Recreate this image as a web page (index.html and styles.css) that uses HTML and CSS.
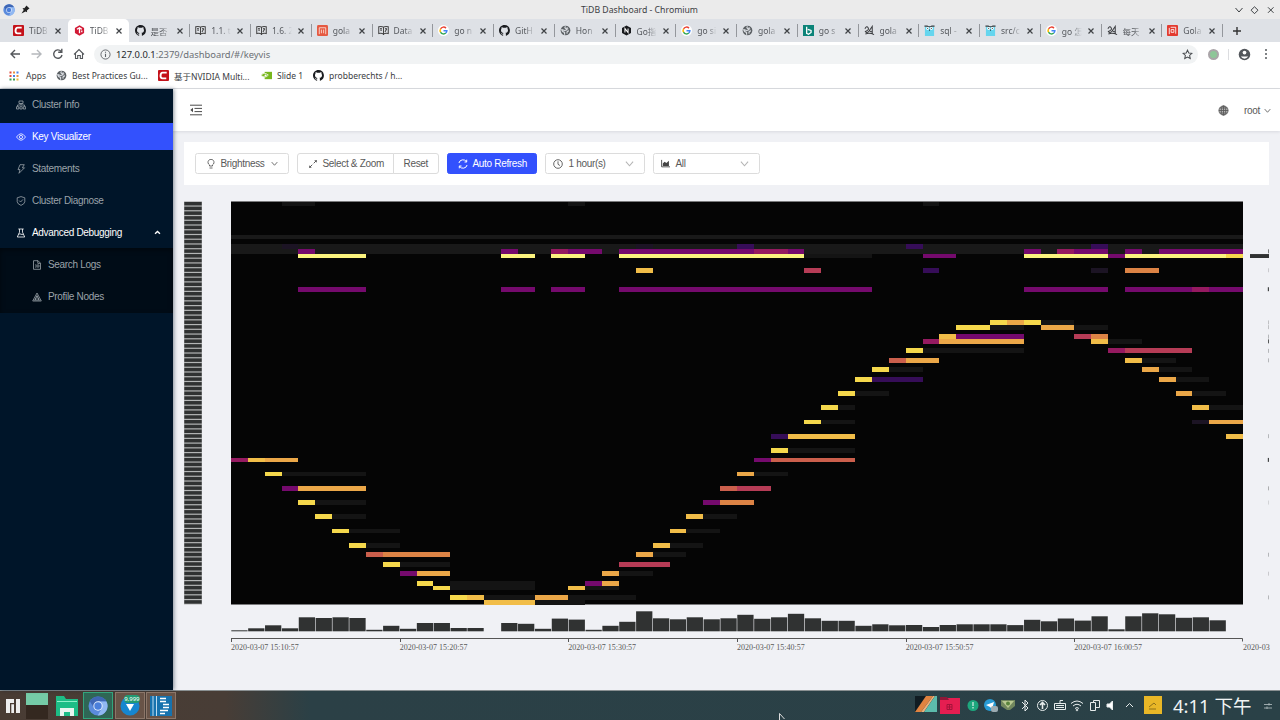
FILE: index.html
```html
<!DOCTYPE html>
<html lang="en">
<head>
<meta charset="utf-8">
<title>TiDB Dashboard</title>
<link rel="stylesheet" href="styles.css">
</head>
<body>
<svg class="defs" aria-hidden="true">
  <symbol id="cc" viewBox="0 0 12 12"><rect width="12" height="12" rx="1" fill="#c4121a"/><path d="M9.500 2.900H5Q3 2.900 2.800 6T5 9.100h4" fill="none" stroke="#fff" stroke-width="2.100"/></symbol>
  <symbol id="ti" viewBox="0 0 12 12"><path d="M6 .300l5 2.850v5.700L6 11.700 1 8.850v-5.700z" fill="#d21a36"/><path d="M3.200 4.700L6 3.100l2.600 1.500M6 3.300v5.800M8.500 6v2" fill="none" stroke="#fff" stroke-width="1.400"/></symbol>
  <symbol id="gh" viewBox="0 0 16 16"><path fill="#191b1f" d="M8 0C3.600 0 0 3.600 0 8c0 3.500 2.300 6.500 5.500 7.600.400.100.500-.200.500-.400v-1.500c-2 .400-2.500-.500-2.700-1-.100-.200-.500-1-.800-1.100-.300-.200-.700-.500 0-.500.600 0 1.100.600 1.200.800.700 1.200 1.900.900 2.300.700.100-.500.300-.900.500-1.100-1.800-.200-3.600-.900-3.600-4 0-.900.300-1.600.800-2.100-.100-.200-.400-1 .100-2.100 0 0 .700-.200 2.200.800a7.600 7.600 0 014 0c1.500-1 2.200-.800 2.200-.800.400 1.100.200 1.900.100 2.100.500.600.800 1.300.800 2.100 0 3.100-1.900 3.700-3.600 3.900.300.300.500.700.500 1.500v2.200c0 .200.100.500.600.400A8 8 0 008 0z"/></symbol>
  <symbol id="book" viewBox="0 0 12 12"><path d="M6 2.400Q4 1 .800 1.900v7.400Q4 8.500 6 10q2-1.500 5.200-.700V1.900Q8 1 6 2.400zV11M2.300 3.800l2 .300M2.300 5.500l2 .300M7.600 4.200l2-.400M7.600 7.600l2-3.500" fill="none" stroke="#444" stroke-width="1.100"/></symbol>
  <symbol id="mm" viewBox="0 0 12 12"><rect width="12" height="12" rx="1.500" fill="#e55a42"/><path d="M2.500 10V3h7v7M4.800 9V5M7.200 9V5" fill="none" stroke="#fbd6cc" stroke-width="1"/></symbol>
  <symbol id="goo" viewBox="0 0 12 12"><circle cx="6" cy="6" r="6" fill="#fff"/><g fill="none" stroke-width="1.600"><path d="M8.700 3.400A3.700 3.700 0 002.800 4.200" stroke="#ea4335"/><path d="M2.800 4.200a3.700 3.700 0 000 3.600" stroke="#fbbc05"/><path d="M2.800 7.800a3.700 3.700 0 005.700 1" stroke="#34a853"/><path d="M8.500 8.800A3.700 3.700 0 009.700 6.200H6" stroke="#4285f4"/></g></symbol>
  <symbol id="globe" viewBox="0 0 12 12"><circle cx="6" cy="6" r="5.300" fill="#5b6064"/><path d="M6 1.500Q4.500 3 6.500 4.200T5 6L2 5q0 2.500 3 3v2.500M8 2.500q-1 1.500 1 2M9.800 6.500Q7 6.500 7.800 9.500" fill="none" stroke="#d9dce1" stroke-width="1.300"/></symbol>
  <symbol id="nn" viewBox="0 0 12 12"><path d="M6 .500l4.900 2.750v5.500L6 11.500 1.100 8.750v-5.500z" fill="#17191c"/><path d="M4.300 8.200V3.900l3.400 4.300V3.900" fill="none" stroke="#fff" stroke-width="1.100"/></symbol>
  <symbol id="bing" viewBox="0 0 12 12"><rect width="12" height="12" fill="#0b8378"/><path d="M4 2v7.200l2 .900 2.800-2V6L5.200 4.800" fill="none" stroke="#fff" stroke-width="1.400"/></symbol>
  <symbol id="jin" viewBox="0 0 12 12"><path d="M1 4Q3 .500 4.500 3T1.500 7Q3 9.500 5.500 6.500L9 1.500v8.500M6 6q1.500 2.500 3 .500M1.500 9.800Q6 8 11 10.500" fill="none" stroke="#3b3d40" stroke-width="1.100"/></symbol>
  <symbol id="goph" viewBox="0 0 12 12"><rect x="1" y="2" width="10" height="10" fill="#65d5ee"/><path d="M.500 1.200h3l1 .700h3l1-.700h3" fill="none" stroke="#343d40" stroke-width="1.300"/><circle cx="4" cy="3.800" r="1.600" fill="#fff"/><circle cx="8" cy="3.800" r="1.600" fill="#fff"/><path d="M4 3.200v1M8 3.200v1M6 5v1.200" stroke="#222" stroke-width="1"/></symbol>
  <symbol id="wen" viewBox="0 0 12 12"><rect width="12" height="12" rx="1" fill="#e33b30"/><path d="M2.500 10V3.200M4 2.500h5.500v7M4.500 5h3v3h-3z" fill="none" stroke="#fff" stroke-width=".900"/></symbol>
  <symbol id="chev" viewBox="0 0 10 10"><path d="M1 3l4 4.500L9 3" fill="none" stroke="currentColor" stroke-width="1.200"/></symbol>
  <symbol id="chromium" viewBox="0 0 20 20"><circle cx="10" cy="10" r="9.500" fill="#5b8bdc"/><path d="M10 .500A9.500 9.500 0 001.800 5.200L6 12l4-6.500h8.500A9.500 9.500 0 0010 .500z" fill="#3f67b5"/><path d="M18.500 5.600H10l4 6.500-4.300 7.400A9.500 9.500 0 0018.500 5.600z" fill="#90b8f2"/><circle cx="10" cy="10" r="4.700" fill="#e2edfd"/><circle cx="10" cy="10" r="3.700" fill="#4b7fdb"/></symbol>
</svg>

<header class="titlebar">
  <div class="title-left">
    <svg class="i12"><use href="#chromium"/></svg>
    <svg class="i9" viewBox="0 0 10 10"><path d="M6 .500l3.500 3.500-1 .500L6.600 6l.200 2L5 7.300.500 9.500 3 5.500 1.700 3.300l2 .200L5.500 1.500z" fill="#222"/></svg>
  </div>
  <span>TiDB Dashboard - Chromium</span>
  <svg class="wm" viewBox="0 0 44 12" fill="none" stroke="#3c4043"><path d="M3.500 4l3.500 4 3.500-4M22.500 2.800L26 6.200l-3.500 3.500L19 6.200zM36 3.300l5.500 5.500M41.500 3.300L36 8.800"/></svg>
</header>

<nav class="tabs" id="tabs"></nav>

<div class="toolbar">
  <svg class="navicons" viewBox="0 0 84 14" fill="none" stroke="#54575b" stroke-width="1.400"><path d="M10 7H1M5 3L1 7l4 4"/><path d="M21.500 7h9M27 3l4 4-4 4" stroke="#b5b8bc"/><path d="M51 4.200A4.200 4.200 0 1052 8M51.800 1.800v3.400h-3.600"/><path d="M64 7.500L69 2.500l5 5M65.500 6.500v5h2.200V8.500h2.600v3h2.200v-5" stroke-width="1.100"/></svg>
  <div class="address">
    <svg class="i11" viewBox="0 0 12 12" fill="none" stroke="#5f6368"><circle cx="6" cy="6" r="5"/><path d="M6 5.200v3.600M6 3v1.200" stroke-width="1.200"/></svg>
    <p><b>127.0.0.1</b>:2379/dashboard/#/keyvis</p>
    <svg class="star" viewBox="0 0 12 12" fill="none" stroke="#4a4d51" stroke-width="1.100"><path d="M6 1.200l1.400 3.100 3.400.400-2.500 2.300.700 3.400L6 8.700l-3 1.700.700-3.400L1.200 4.700l3.400-.400z"/></svg>
  </div>
  <span class="ext"></span>
  <span class="split"></span>
  <svg class="avatar" viewBox="0 0 14 14"><circle cx="7" cy="7" r="6.200" fill="#53575c"/><circle cx="7" cy="4.900" r="2" fill="#fff"/><path d="M3 9.200h8Q9.500 11.500 7 11.500T3 9.200z" fill="#fff"/></svg>
  <svg class="dots" viewBox="0 0 4 12" fill="#55585c"><circle cx="2" cy="2" r="1"/><circle cx="2" cy="6" r="1"/><circle cx="2" cy="10" r="1"/></svg>
</div>

<div class="bookmarks">
  <svg class="i10" viewBox="0 0 10 10"><path d="M.500 1.500h2M.500 5h2" stroke="#e04a3f" stroke-width="2"/><path d="M4 1.500h2M7.500 5h2" stroke="#e8913f" stroke-width="2"/><path d="M7.500 1.500h2M4 5h2" stroke="#4a81e8" stroke-width="2"/><path d="M.500 8.500h2M4 8.500h2" stroke="#3b9c56" stroke-width="2"/><path d="M7.500 8.500h2" stroke="#e8b93f" stroke-width="2"/></svg><span class="b1">Apps</span>
  <svg class="i11"><use href="#globe"/></svg><span class="b2">Best Practices Gu...</span>
  <svg class="i11"><use href="#cc"/></svg><span class="b3">基于NVIDIA Multi...</span>
  <svg class="i11" viewBox="0 0 12 12"><path d="M4 2h8v8H4z" fill="#78b71c"/><path d="M0 6q3-4.500 8-.500Q5 9.500 0 6z" fill="#78b71c" stroke="#e7f4d2"/><circle cx="5" cy="6" r="1.200" fill="#fff"/></svg><span class="b4">Slide 1</span>
  <svg class="i11"><use href="#gh"/></svg><span>probberechts / h...</span>
</div>

<main class="app">
  <aside class="side">
    <a class="item"><svg viewBox="0 0 10 10"><path d="M3 1h4v2.500H3zM5 3.500V5M1.500 6.500V5h7v1.500M.500 6.700h2.300V9H.500zM3.900 6.700h2.300V9H3.900zM7.300 6.700h2.300V9H7.300z"/></svg>Cluster Info</a>
    <a class="item on"><svg viewBox="0 0 10 10"><path d="M.500 5Q5-1.500 9.500 5 5 11.500.500 5z"/><circle cx="5" cy="5" r="1.600"/></svg>Key Visualizer</a>
    <a class="item"><svg viewBox="0 0 10 10"><path d="M4 .700h4.300L6.300 3.800h2.200L3 9.300l1-3.700H2z"/></svg>Statements</a>
    <a class="item"><svg viewBox="0 0 10 10"><path d="M5 .600l3.800 1.200v4Q8.500 8 5 9.400 1.500 8 1.200 5.800v-4zM3.200 4.600L4.600 6l2.300-2.500"/></svg>Cluster Diagnose</a>
    <a class="item open"><svg viewBox="0 0 10 10"><path d="M2.300 1h5.400M3.500 1v3.200L1.300 9h7.400L6.500 4.200V1M2.600 6.200q1.400-.700 2.400 0t2.400 0"/></svg>Advanced Debugging<svg class="up" viewBox="0 0 10 10"><path d="M1.500 6.800L5 3.500l3.500 3.300"/></svg></a>
    <div class="sub">
      <a class="item"><svg viewBox="0 0 10 10"><path d="M1.500.700H6L8.500 3.200v6.100h-7zM5.800.700v2.700h2.700M3 5h1.500M3 7h1.500"/><circle cx="6" cy="6" r="1.200"/></svg>Search Logs</a>
      <a class="item"><svg viewBox="0 0 10 10"><path d="M5 1L.700 9h8.600zM2.500 8.500L5 3.500l2.500 5M5 4v5M3.500 6.500v2M6.500 6.500v2"/></svg>Profile Nodes</a>
    </div>
  </aside>
  <section class="main">
    <header class="top">
      <svg class="fold" viewBox="0 0 12 12" fill="none" stroke="#4b4b4b"><path d="M0 1.200h12M4.500 4.400H12M4.500 7.600H12M0 10.800h12"/><path d="M3 3.700v4.600L.300 6z" fill="#4b4b4b" stroke="none"/></svg>
      <div class="user">
        <svg class="world" viewBox="0 0 12 12" fill="none" stroke="#555" stroke-width=".900"><circle cx="6" cy="6" r="5" fill="#b5b5b5"/><ellipse cx="6" cy="6" rx="2.400" ry="5"/><path d="M1 6h10M6 1v10M1.900 3.300h8.200M1.900 8.700h8.200"/></svg>
        <span>root</span><svg class="c8"><use href="#chev"/></svg>
      </div>
    </header>
    <div class="controls">
      <button class="btn bright"><svg class="i10" viewBox="0 0 10 10" fill="none" stroke="currentColor" stroke-width=".900"><path d="M3.500 7V5.900a3 3 0 113 0V7zM3.500 9h3"/></svg>Brightness<svg class="c8"><use href="#chev"/></svg></button>
      <div class="group">
        <button class="btn zoom"><svg class="i10" viewBox="0 0 10 10" fill="none" stroke="currentColor"><path d="M5.700 4.300L8.500 1.500M4.300 5.700L1.500 8.500"/><path d="M6.200 1.200h2.600v2.600zM1.200 6.200v2.600h2.600z" fill="currentColor" stroke="none"/></svg>Select &amp; Zoom</button>
        <button class="btn reset">Reset</button>
      </div>
      <button class="btn primary"><svg class="i10" viewBox="0 0 10 10" fill="none" stroke="currentColor"><path d="M.900 4A4.200 4.200 0 018.500 2.700M9.100 6A4.200 4.200 0 011.500 7.300M8.700.700v2.300H6.500M1.300 9.300V7h2.200"/></svg>Auto Refresh</button>
      <div class="select hours"><svg class="i10" viewBox="0 0 10 10" fill="none" stroke="#555" stroke-width=".900"><circle cx="5" cy="5" r="4.300"/><path d="M5 2.300v3l1.900 1.200"/></svg><span>1 hour(s)</span><svg class="c9"><use href="#chev"/></svg></div>
      <div class="select metric"><svg class="i9" viewBox="0 0 10 10"><path d="M.700 1v7.700H10" fill="none" stroke="#444"/><path d="M2 7.700V5l2-2 2 1.500L8.800 2v5.700z" fill="#444"/></svg><span>All</span><svg class="c9"><use href="#chev"/></svg></div>
    </div>
    <svg class="keyvis" id="keyvis" width="1086" height="460" viewBox="184 200 1086 460"></svg>
  </section>
</main>

<footer class="taskbar">
  <div class="launch">
    <svg width="14" height="14" viewBox="0 0 14 14"><path d="M0 0h8v4H4v10H0zM5.300 5.300H8V14H5.300zM10 0h4v14h-4z" fill="#eee"/></svg>
    <span class="pager"><i></i></span>
    <svg class="files" viewBox="0 0 22 22"><path d="M0 1h8l2 3h12v17H0z" fill="#1dbd86"/><path d="M1 6h20v1H1z" fill="#8ef0c9"/><path d="M4 21v-8h14v8h-4v-4H8v4z" fill="#e9f5ef"/></svg>
    <span class="task active"><svg width="20" height="20"><use href="#chromium"/></svg></span>
    <span class="task"><svg width="20" height="20" viewBox="0 0 20 20"><circle cx="10" cy="10" r="9.500" fill="#1686cf"/><path d="M6 8h8l-4 7z" fill="#fff"/></svg><em>9,999</em></span>
    <span class="task"><svg width="22" height="20" viewBox="0 0 22 20"><path d="M0 0h22v20H0z" fill="#1672ae"/><path d="M6.500 0v20M3 0v20" stroke="#bcdcf0"/><path d="M10 2.500h6M10 5.500h6M13 8.500h6M13 11.500h6M10 14.500h8M10 17.500h5" stroke="#fff" stroke-width="1.400"/></svg></span>
  </div>
  <svg class="cursor" viewBox="0 0 6 7"><path d="M.500.500V7M.500.500L5.500 6" fill="none" stroke="#ddd"/></svg>
  <svg class="tray" viewBox="0 0 252 22" fill="none" stroke="#e7ecec">
    <g stroke="none"><path d="M0 1h22v16H0z" fill="#111c22"/><path d="M11 1h7L6 17H0z" fill="#e08340"/><path d="M18 1h2L9 17H6z" fill="#eeb07b"/><path d="M20 1h2v16H9z" fill="#5cbcac"/><path d="M25 3h20v16H25z" fill="#e51e51"/><path d="M25 2h7l2 3h-9z" fill="#8d1838"/><path d="M32 9.500h5v5h-5zM34.500 9.500v5M32 12h5" fill="none" stroke="#a5123b"/><circle cx="58" cy="10.500" r="5.500" fill="#1da77d"/><path d="M57.500 7h1v4h-1zM57.500 12h1v1.500h-1z" fill="#fff"/><circle cx="75" cy="10" r="6" fill="#289bd4"/><path d="M71 10l8-3-2 7-2-2z" fill="#fff"/><rect x="76" y="11" width="7" height="6" rx="2" fill="#9cabb1"/><path d="M86 5h14v6l-5 4h-3l-6-4z" fill="#72885e"/><path d="M87 6h12l-6 7z" fill="#b9c991"/><circle cx="93" cy="8.500" r="2" fill="#5a843c"/></g>
    <path d="M107 7l6 6-3 3V5l3 3-6 6"/><circle cx="127.500" cy="10.500" r="5"/><path d="M127.500 14V8M125 10l2.500-2.500L130 10" stroke-width="1.600"/><path d="M139.500 8.500h11v6h-11zM145 8V5.500h3M141 10.500h8M141 12.500h8"/><path d="M156 8.500q6-5 12 0M158 11q4-3.500 8 0M160 13.500q2-2 4 0"/><circle cx="162" cy="15" r=".800"/><path d="M175.500 7.500h5v8h-5zM178.500 7V5.500h6v7h-4"/><path d="M192 9h2.500l3-3v9l-3-3H192z" fill="#fff"/><path d="M211 12l3.500-3.500L218 12"/>
    <rect x="229" y="1" width="18" height="18" fill="#e9b727" stroke="none"/><path d="M234 12l5-4 2 2M234 14h7" stroke="#8e7019"/>
  </svg>
  <time>4:11 下午</time>
  <svg class="sliders" viewBox="0 0 8 8" stroke="#b9c3c5"><path d="M0 2.500h8M0 6h8M5 1v2.500M3 4.500V7" stroke-width=".800"/></svg>
</footer>
<script src="app.js"></script>
</body>
</html>
```

FILE: styles.css
```css
* { box-sizing: border-box; }
body {
  margin: 0; width: 1280px; height: 720px; overflow: hidden;
  display: flex; flex-direction: column;
  font-family: "Noto Sans", "Noto Sans CJK SC", sans-serif;
  font-size: 8.500px; color: #3c4043; background: #fff;
}
svg { flex: none; display: block; }
.defs { position: absolute; width: 0; height: 0; }
.i9 { width: 9px; height: 9px; }
.i10 { width: 10px; height: 10px; }
.i11 { width: 11px; height: 11px; }
.i12 { width: 12px; height: 12px; }
.c8 { width: 7px; height: 7px; }
.c9 { width: 9px; height: 9px; }

.titlebar { flex: none; height: 19px; background: #ebebeb; display: grid; grid-template-columns: 1fr auto 1fr; align-items: center; padding: 0 4px 0 3px; font-size: 8.700px; }
.title-left { display: flex; align-items: center; gap: 6px; }
.wm { width: 44px; height: 12px; justify-self: end; }

.tabs { flex: none; height: 23px; background: #dee1e6; display: flex; padding-left: 7px; }
.tab { flex: none; width: 60.750px; display: flex; align-items: center; padding-left: 6px; position: relative; color: #55585d; }
.tab.sep::before { content: ""; position: absolute; left: 0; top: 5px; width: 1px; height: 13px; background: #94979c; }
.tab.active { background: #fff; border-radius: 5px 5px 0 0; }
.tab-text { width: 20px; margin: 0 6px 0 5px; white-space: nowrap; -webkit-mask-image: linear-gradient(90deg, #000 50%, transparent); mask-image: linear-gradient(90deg, #000 50%, transparent); }
.tab-x { width: 6px; height: 6px; }
.plus { align-self: center; width: 10px; height: 10px; margin-left: 4px; }

.toolbar { flex: none; height: 23px; display: flex; align-items: center; padding-left: 9.500px; padding-top: 1px; }
.navicons { width: 84px; height: 14px; }
.address { margin-left: .5px; width: 1104px; height: 19px; border-radius: 10px; background: #f1f3f4; display: flex; align-items: center; padding: 0 5px 0 6px; }
.address p { margin: 0 auto 0 5px; font-size: 9.400px; color: #6b6f74; }
.address b { font-weight: 400; color: #27292c; }
.star { width: 11px; height: 11px; }
.ext { width: 11px; height: 11px; border-radius: 50%; margin-left: 10px; background: #8ec698; border: 2px solid #aaa4a8; }
.split { width: 1px; height: 11px; background: #dcdde0; margin: 0 9px; }
.avatar { width: 13px; height: 13px; }
.dots { width: 4px; height: 12px; margin-left: 13px; }

.bookmarks { flex: none; height: 24px; border-bottom: 1px solid #dadce0; display: flex; align-items: center; padding: 0 0 2px 9px; white-space: nowrap; }
.bookmarks span { margin-left: 5px; }
.bookmarks .b1 { width: 30px; margin-left: 7px; }
.bookmarks .b2 { width: 86px; }
.bookmarks .b3 { width: 87px; }
.bookmarks .b4 { width: 36px; }

.app { flex: none; height: 601px; display: flex; background: #f0f1f5; font: 10px "Liberation Sans", Arial, sans-serif; letter-spacing: -.320px; color: #595959; }
.side { flex: none; width: 173px; padding-top: 2px; background: #001529; box-shadow: 1px 0 4px rgba(0, 21, 41, .450); position: relative; }
.item { height: 27px; margin-bottom: 5px; padding-left: 16px; display: flex; align-items: center; color: #9ba3aa; }
.item svg { width: 10px; height: 10px; margin-right: 6px; fill: none; stroke: currentColor; stroke-width: .800; }
.item.on { background: #3351fd; color: #fff; }
.item.open { color: #fff; margin-bottom: 2px; }
.item .up { width: 7px; height: 7px; margin: 0 12px 0 auto; stroke-width: 2; }
.sub { background: #000c17; height: 65px; padding-top: 3px; box-shadow: inset 0 2px 5px rgba(0, 0, 0, .450); }
.sub .item { padding-left: 32px; }

.main { flex: 1; min-width: 0; }
.top { height: 42px; background: #fff; box-shadow: 0 1px 3px rgba(0, 21, 41, .100); display: flex; align-items: center; justify-content: space-between; padding: 0 9px 0 17px; }
.fold { width: 12px; height: 12px; }
.user { display: flex; align-items: center; }
.world { width: 11px; height: 11px; margin-right: 15px; }
.user .c8 { margin-left: 4px; }
.controls { margin: 11px 11px 0; height: 43px; background: #fff; display: flex; align-items: center; padding-left: 10.500px; }
.btn { height: 21.500px; padding: 0 10px; border: 1px solid #dcdcdc; border-radius: 2.500px; background: #fff; color: #595959; font: inherit; letter-spacing: inherit; display: flex; align-items: center; white-space: nowrap; }
.btn svg:first-child { margin-right: 5px; }
.bright { width: 94px; margin-right: 8px; }
.bright .c8 { margin-left: 6px; }
.group { display: flex; margin-right: 8px; }
.zoom { width: 97px; border-radius: 3px 0 0 3px; }
.reset { width: 46px; margin-left: -1px; border-radius: 0 3px 3px 0; padding: 0 10px; }
.primary { width: 90px; margin-right: 8px; background: #3351fd; border-color: #3351fd; color: #fff; }
.select { height: 21.500px; border: 1px solid #dcdcdc; border-radius: 2.500px; display: flex; align-items: center; padding: 0 10px 0 7px; }
.select span { margin-left: 6px; margin-right: auto; }
.select .c9 { color: #b5b5b5; }
.hours { width: 100px; margin-right: 8px; }
.metric { width: 107px; }
.keyvis { margin: 15px 0 0 11px; letter-spacing: 0; }
.keyvis text { font: 8px "Liberation Serif", serif; fill: #595959; }

.taskbar { flex: none; height: 30px; background: linear-gradient(90deg, #493c34 0, #483d36 225px, #2b4046 310px, #2a4147 100%); border-top: 1px solid #8a9092; display: flex; align-items: center; color: #f1f4f4; }
.launch { display: flex; align-items: center; padding-left: 6px; width: 779px; }
.pager { width: 22px; height: 26px; margin-left: 6px; background: #342820; }
.pager i { display: block; height: 12px; background: #75cba7; }
.files { width: 22px; height: 22px; margin: 0 5px 0 8px; }
.task { width: 30px; height: 27px; margin-right: 1.500px; border: 1px solid #8b7669; background: #685347; display: flex; align-items: center; justify-content: center; position: relative; }
.task.active { background: #2f6655; border-color: #32a57d; }
.task em { position: absolute; right: 4px; top: 2px; font: 6px "Noto Sans", sans-serif; line-height: 8px; border-radius: 4px; background: #219b73; color: #fff; }
.cursor { width: 6px; height: 7px; align-self: flex-end; margin-right: 130px; }
.tray { width: 252px; height: 22px; }
.taskbar time { font-size: 18.500px; line-height: 27px; white-space: nowrap; margin: 0 9px 0 6px; width: 82px; }
.sliders { width: 8px; height: 8px; }
```

FILE: app.js
```js
const tabs = [
  ['cc', 'TiDB'], ['ti', 'TiDB'], ['gh', '是否'], ['book', '1.1. t'], ['book', '1.6. 2'],
  ['mm', 'gola'], ['book', 'Data'], ['goo', 'go n'], ['gh', 'GitH'], ['globe', 'Hon'],
  ['nn', 'Go指'], ['goo', 'go si'], ['globe', 'gola'], ['bing', 'go s'], ['jin', 'gola'],
  ['goph', 'sql -'], ['goph', 'src/c'], ['goo', 'go 怎'], ['jin', '每天'], ['wen', 'Gola']
];
document.getElementById('tabs').innerHTML = tabs.map(([icon, label], i) =>
  `<div class="tab${i === 1 ? ' active' : ''}${i > 2 ? ' sep' : ''}"><svg class="i11"><use href="#${icon}"/></svg>` +
  `<span class="tab-text">${label}</span><svg class="tab-x" viewBox="0 0 6 6"><path d="M.5.5l5 5M5.500.5l-5 5" stroke="#3f4246" stroke-width="1.200"/></svg></div>`
).join('') + '<div class="tab sep"><svg class="plus" viewBox="0 0 10 10"><path d="M5 1v8M1 5h8" stroke="#333" stroke-width="1.400"/></svg></div>';

// Heat colours: grey, dark violet, purple, crimson, red, coral, orange, amber, gold, yellow
const heat = {
  k: '#141414', K: '#191919', n: '#1c1424', d: '#360d58', p: '#750a6d', m: '#951a60',
  r: '#b63c56', c: '#cb5f4c', o: '#dc8345', a: '#eba748', g: '#f1bd48', y: '#f5d84c', w: '#fbf37e'
};
// Each run is: first column, last column, heat level
const rows = {
  0: '3-4k 20-20k 41-41k',
  7: '0-59K',
  9: '0-59K 3-3n 24-24n 30-30d 40-40d 51-51d',
  10: '0-59K 4-4p 16-16p 19-19m 20-21p 23-30p 31-32m 33-33p 47-47p 49-49m 50-51p 53-53p 55-59p',
  11: '4-7w 16-17w 19-20w 23-33w 34-37k 41-42p 47-51w 52-52p 53-58w 59-59y',
  14: '24-24g 34-34r 41-41d 51-51n 53-54o',
  18: '4-7p 16-17p 19-20p 23-37p 47-51p 53-56p 57-57m 58-59p',
  25: '45-45y 46-46a 47-47y 48-49k',
  26: '43-44y 45-46k 48-49a 50-51k',
  28: '42-42g 43-46p 50-50r 51-51o',
  29: '41-41m 42-46a 51-51g 52-53k',
  31: '40-40y 41-46k 52-52m 53-56r',
  33: '39-39c 40-41a 53-53g 54-55k',
  35: '38-38y 39-40k 54-54a 55-56k',
  37: '37-37y 38-40d 55-55a 56-57k',
  40: '36-36y 37-38k 56-56a 57-58k',
  43: '35-35y 36-36k 57-57g 58-59k',
  46: '34-34y 35-36k 57-57n 58-59a',
  49: '32-32d 33-36g 59-59g',
  52: '32-32y 33-36k',
  54: '0-0m 1-1g 2-3a 31-31p 32-36c',
  57: '2-2y 3-7k 30-30a 31-32k',
  60: '3-3p 4-7a 29-29c 30-31r',
  63: '4-4y 5-7k 28-28p 29-30o',
  66: '5-5y 6-7k 27-27g 28-29k',
  69: '6-6y 7-9k 26-26g 27-28k',
  72: '7-7y 8-9k 25-25g 26-27k',
  74: '8-8c 9-12o 24-24a 25-26k',
  76: '9-9y 10-12k 23-25r',
  78: '10-10p 11-12a 22-22a 23-24k',
  80: '11-11y 13-17k 21-21p 22-22a',
  81: '12-12y 13-17k 20-20g 21-22k',
  83: '13-13y 14-14g 15-17k 18-19a 20-23k',
  84: '15-17g 18-20k'
};
const X = 231, Y = 201.5, CW = 1012 / 60, RH = 403 / 85;
const rect = (x, y, w, h, fill, extra = '') => `<rect x="${x}" y="${y}" width="${w}" height="${h}" fill="${fill}" ${extra}/>`;
const crisp = 'shape-rendering="crispEdges"';
let out = rect(X, Y, 1012, 403, '#050505');
for (const [r, runs] of Object.entries(rows)) {
  for (const run of runs.split(' ')) {
    const [, a, b, level] = run.match(/(\d+)-(\d+)(\w)/);
    out += rect(X + a * CW, Y + r * RH, (b - a + 1) * CW, RH, heat[level], crisp);
  }
}

// Key range labels
out += rect(184, Y, 18, 403, '#b4b6b6');
for (let i = 0; i < 85; i++) out += rect(184.3, Y + i * RH + .4, 17.4, RH - 1.2, '#303232');

// Totals per key range
const totals = { 10: [1, .6], 11: [19, 1], 14: [1, .2], 18: [1.2, .9], 25: [1, .25], 26: [1, .25], 28: [1, .3], 29: [1, .8], 31: [1, .3], 33: [1, .3], 49: [1, .3], 54: [1.2, .9], 60: [1, .35], 63: [1, .15], 74: [1, .3], 78: [1, .2], 83: [1, .3] };
for (const [r, [w, alpha]] of Object.entries(totals)) out += rect(1269 - w, Y + r * RH + .4, w, RH - .8, '#303232', `opacity="${alpha}"`);

// Totals per time bucket
const buckets = [1, 3, 6, 3, 14, 13.3, 14, 13.3, 1.5, 5.5, 2.5, 8.3, 8.3, 3.3, 3.3, 0, 8.3, 7.5, 2.5, 12.7, 11.7, 1.5, 5.5, 9.5, 20, 13, 12, 14, 12, 13, 16.5, 12.5, 14, 17.5, 13, 10.5, 10.5, 5.5, 7, 6, 6.3, 4.3, 6.3, 7, 7, 7, 6.2, 11.5, 10, 12.8, 10.7, 15, 2, 15, 18, 17, 13.5, 14, 11, 0];
buckets.forEach((h, i) => { if (h) out += rect(X + i * CW + .3, 631.3 - h, CW - .6, h, '#303232'); });

// Time axis
out += `<path d="M231.500 641.500V638.500H1242.500V641.500" fill="none" stroke="#555"/>`;
['15:10:57', '15:20:57', '15:30:57', '15:40:57', '15:50:57', '16:00:57', ''].forEach((t, i) => {
  const x = X + i * 1012 / 6;
  if (t) out += `<path d="M${Math.round(x) + .5} 638v4" stroke="#555"/>`;
  out += `<text x="${x}" y="650">${t ? '2020-03-07 ' + t : '2020-03'}</text>`;
});
document.getElementById('keyvis').innerHTML = out;
```
